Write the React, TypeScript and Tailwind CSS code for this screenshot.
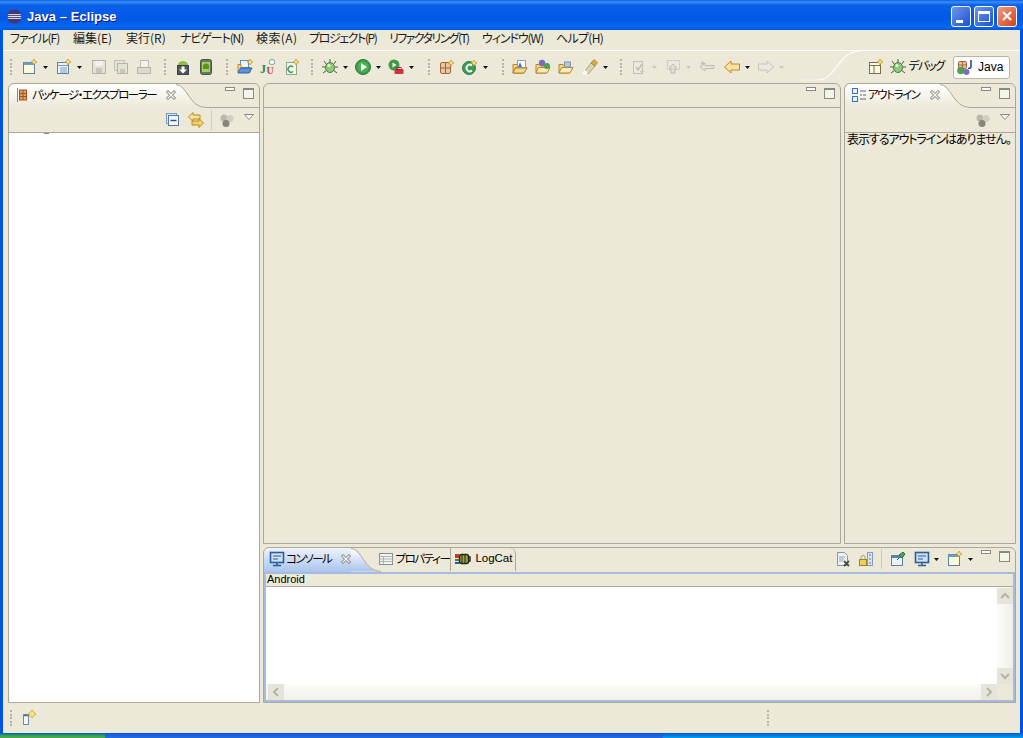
import type { ReactNode } from 'react';

const S = ({ children, w = 16, h = 16 }: { children: ReactNode; w?: number; h?: number }) => (
  <svg width={w} height={h} viewBox={`0 0 ${w} ${h}`} className="shrink-0 block">{children}</svg>
);

const Sparkle = ({ x = 12, y = 3 }: { x?: number; y?: number }) => (
  <path d={`M${x} ${y - 3}l1 2 2 1-2 1-1 2-1-2-2-1 2-1z`} fill="#fbe27a" stroke="#b98a1c" strokeWidth=".6" />
);

const FolderOpen = () => (
  <>
    <path d="M1 5.5h4l1 1.5h5v7H1z" fill="#f7d98c" stroke="#b5862a" />
    <path d="M1 14l2.5-5.5H15L12 14z" fill="#fbeab5" stroke="#b5862a" />
  </>
);

const icons: Record<string, ReactNode> = {
  newWiz: (
    <>
      <rect x="1.5" y="3.5" width="11" height="11" fill="#fdf8d8" stroke="#5c80a8" />
      <rect x="1.5" y="3.5" width="11" height="2.5" fill="#6f9bc8" />
      <Sparkle />
    </>
  ),
  newType: (
    <>
      <rect x="1.5" y="3.5" width="11" height="11" fill="#eef2f8" stroke="#5c80a8" />
      <path d="M2 6.500h10M4 9h7M4 11h7M4 13h7" stroke="#7a9cc0" />
      <Sparkle />
    </>
  ),
  save: (
    <>
      <rect x="1.5" y="1.5" width="13" height="13" fill="#e4e2d6" stroke="#b4b3a8" />
      <rect x="4" y="2" width="8" height="5" fill="#f3f2ea" />
      <rect x="5" y="9" width="6" height="5" fill="#c9c7bb" />
    </>
  ),
  saveAll: (
    <>
      <rect x="1.500" y="1.500" width="10" height="10" fill="#e4e2d6" stroke="#c1c0b4" />
      <rect x="4.500" y="4.500" width="10" height="10" fill="#e4e2d6" stroke="#b4b3a8" />
      <rect x="7" y="10" width="5" height="4" fill="#c9c7bb" />
    </>
  ),
  print: (
    <>
      <rect x="4.500" y="1.500" width="8" height="8" fill="#f3f2ea" stroke="#bdbcb0" />
      <rect x="1.500" y="8.500" width="13" height="6" fill="#dcdace" stroke="#b4b3a8" />
    </>
  ),
  droidDown: (
    <>
      <path d="M3 6a5 4 0 0 1 10 0z" fill="#8fbf3f" />
      <rect x="2.500" y="6.500" width="11" height="9" fill="#50565c" stroke="#3c4147" />
      <path d="M6.500 7.500h3v3H12l-4 4-4-4h2.500z" fill="#fff" />
    </>
  ),
  droidPhone: (
    <>
      <rect x="2.500" y=".5" width="11" height="15" rx="2" fill="#6a766c" stroke="#4a524c" />
      <rect x="4" y="3" width="8" height="10" fill="#a4cf58" />
      <path d="M5 7a3 2.500 0 0 1 6 0v3H5z" fill="#5f8f23" />
    </>
  ),
  newProj: (
    <>
      <rect x="3.500" y="1.500" width="8" height="7" fill="#eef4fb" stroke="#6a8db4" />
      <path d="M1 5.500h3v3h9v5H1z" fill="#f7d98c" stroke="#b5862a" />
      <path d="M1 14l2.500-5H15L12 14z" fill="#5a94dc" stroke="#2f5fa8" />
      <Sparkle x={13} y={3} />
    </>
  ),
  junit: (
    <>
      <rect x="9.500" y=".5" width="5" height="5" rx="2" fill="#fff" stroke="#6fa07a" />
      <text x="0" y="14" fontSize="12" fontWeight="700" fontFamily="Liberation Serif, serif" fill="#238c50">J</text>
      <text x="6.500" y="15" fontSize="10" fontWeight="700" fontFamily="Liberation Serif, serif" fill="#d0404a">U</text>
    </>
  ),
  newClass: (
    <>
      <rect x="2.500" y="3.500" width="10" height="12" fill="#f8f4e2" stroke="#8da88a" />
      <path d="M9 8a3 3 0 1 0 0 4.500" fill="none" stroke="#2f9a68" strokeWidth="1.400" />
      <Sparkle />
    </>
  ),
  bug: (
    <>
      <path d="M2 2l3 4M14 2l-3 4M0 8h4M16 8h-4M1 14l4-3M15 14l-4-3M8 0v3" stroke="#4c5b44" />
      <ellipse cx="8" cy="8.500" rx="4.500" ry="5" fill="#8fc97a" stroke="#4a7a3c" />
      <circle cx="7" cy="6.500" r="1.500" fill="#e5f5d8" />
    </>
  ),
  run: (
    <>
      <circle cx="8" cy="8" r="7.500" fill="#3f9a46" stroke="#2d7a3a" />
      <circle cx="8" cy="8" r="5.500" fill="#4bb154" />
      <path d="M6 4l6 4-6 4z" fill="#f4fbf0" />
    </>
  ),
  ext: (
    <>
      <circle cx="6" cy="6" r="5.500" fill="#3f9a46" />
      <path d="M4.500 3.500l4 2.500-4 2.500z" fill="#f4fbf0" />
      <rect x="6.500" y="10" width="9" height="5" rx="1" fill="#d8303a" />
      <rect x="9" y="8.500" width="4" height="2" fill="none" stroke="#a02028" />
    </>
  ),
  grid: (
    <>
      <rect x="1.500" y="3.500" width="10" height="11" rx="1.500" fill="#e7c8a0" stroke="#a5623a" />
      <path d="M6.500 3.500v11M1.500 9h10" stroke="#a5623a" />
      <Sparkle x={12} y={4} />
    </>
  ),
  greenC: (
    <>
      <circle cx="7" cy="9" r="6.500" fill="#3f9a56" stroke="#2c7a44" />
      <path d="M10 6.500a3.300 3.300 0 1 0 0 5" fill="none" stroke="#fff" strokeWidth="1.800" />
      <Sparkle x={12} y={4} />
    </>
  ),
  folderA: (
    <>
      <FolderOpen />
      <rect x="5.500" y="1.500" width="8" height="7" fill="#fff" stroke="#8aa0b8" />
      <path d="M6 8l2-5 2 5z" fill="#3c7ac8" />
      <path d="M1 14l2.500-5H15L12 14z" fill="#f7d98c" stroke="#b5862a" />
    </>
  ),
  folderB: (
    <>
      <FolderOpen />
      <circle cx="7" cy="4" r="3.200" fill="#7a6cc0" />
      <circle cx="12" cy="7" r="3" fill="#4fa050" />
    </>
  ),
  folderC: (
    <>
      <FolderOpen />
      <rect x="6.500" y="3" width="6" height="5" fill="#b9c7d8" stroke="#8296ac" />
    </>
  ),
  torch: (
    <>
      <path d="M3 12l6-8 4 3-7 8z" fill="#dcd6b2" stroke="#8a8468" strokeWidth=".7" />
      <path d="M9 4l3-3.500 3.500 3-2.500 3.500z" fill="#e2a93e" stroke="#a87a24" strokeWidth=".7" />
      <path d="M0 14l3-3 3 3-3 2z" fill="#fff" />
    </>
  ),
  nextAnn: (
    <>
      <rect x="2.500" y="2.500" width="9" height="12" fill="#eceae0" stroke="#c3c2b6" />
      <path d="M5 8l2 3 4-6" fill="none" stroke="#bdbcae" strokeWidth="1.500" />
      <path d="M11 10v4m-2-2l2 2 2-2" fill="none" stroke="#c8c7ba" />
    </>
  ),
  prevAnn: (
    <>
      <rect x="2.500" y="1.500" width="12" height="9" fill="#eceae0" stroke="#c3c2b6" strokeDasharray="2 1" />
      <path d="M8 5l4 4H10v5H6V9H4z" fill="#e2e0d4" stroke="#bdbcae" />
    </>
  ),
  backEdit: (
    <>
      <path d="M1 8l5-4v2.500h9v3H6V12z" fill="#e6e4d8" stroke="#bdbcae" />
      <circle cx="3.500" cy="4" r="1.500" fill="#c3c2b6" />
    </>
  ),
  back: <path d="M.5 8l6.500-6v3h8.500v6H7v3z" fill="#fbe29a" stroke="#c08a24" />,
  forward: <path d="M15.500 8L9 2v3H.5v6H9v3z" fill="#eceae0" stroke="#c3c2b6" />,
  openPersp: (
    <>
      <rect x="1.500" y="3.500" width="11" height="11" fill="#fdfbe8" stroke="#7c6a4a" />
      <path d="M1.500 6.500h11M6 6.500v8" stroke="#7c6a4a" />
      <Sparkle />
    </>
  ),
  java: (
    <>
      <rect x="1.500" y="2.500" width="8" height="7" rx="1.500" fill="#e7c8a0" stroke="#a5623a" />
      <path d="M5.500 2.500v7M1.500 6h8" stroke="#a5623a" />
      <circle cx="4" cy="11.500" r="3.800" fill="#4fa050" />
      <circle cx="9.500" cy="13" r="3" fill="#7a6cc0" />
      <path d="M14 1v7a2 2 0 0 1-3 1" fill="none" stroke="#26407c" strokeWidth="1.500" />
    </>
  ),
  pkg: (
    <>
      <path d="M2.500 1v14" stroke="#6c8cb0" />
      <rect x="4.500" y="3" width="7" height="10" fill="#e2a060" stroke="#9a5420" />
      <path d="M8 3v10M4.500 6.500h7M4.500 9.500h7" stroke="#9a5420" />
    </>
  ),
  collapse: (
    <>
      <rect x="1.500" y="1.500" width="10" height="10" fill="#dbe7f4" stroke="#7a9cc0" />
      <rect x="3.500" y="3.500" width="10" height="10" fill="#f3f7fb" stroke="#4f7aa8" />
      <path d="M5.500 8.500h6" stroke="#2b4f80" strokeWidth="1.400" />
    </>
  ),
  link: (
    <>
      <path d="M.5 5l4.500-4.500v2.500h7v4H5v2.500z" fill="#fbe29a" stroke="#b98a1c" />
      <path d="M15.500 11L11 6.500V9H4v4h7v2.500z" fill="#f5cf6a" stroke="#b98a1c" />
    </>
  ),
  dots: (
    <>
      <circle cx="5" cy="6" r="3.500" fill="#b9b8ac" />
      <circle cx="11" cy="6.500" r="3.500" fill="#d0cfc4" />
      <circle cx="7" cy="11.500" r="3.500" fill="#86857a" />
    </>
  ),
  outline: (
    <>
      <rect x="1.500" y="1.500" width="5" height="5" fill="#e9f1fb" stroke="#3a72c0" />
      <rect x="1.500" y="9.500" width="5" height="5" fill="#e9f1fb" stroke="#3a72c0" />
      <path d="M9 4h6M9 8h2M12 8h3M9 12h6" stroke="#5a6a78" />
    </>
  ),
  monitor: (
    <>
      <rect x="1.500" y="1.500" width="13" height="10" fill="#cfe0f2" stroke="#2c5f98" strokeWidth="1.600" />
      <path d="M4 5h8M4 8h5" stroke="#2c5f98" />
      <path d="M4 14.500h8M8 12v2" stroke="#2c5f98" strokeWidth="1.500" />
    </>
  ),
  table: (
    <>
      <rect x="1.500" y="2.500" width="13" height="11" fill="#f4f4ee" stroke="#8a8d90" />
      <path d="M1.500 5.500h13M1.500 8h13M1.500 10.500h13M5.500 5.500v8" stroke="#b0b3b6" />
    </>
  ),
  logcat: (
    <>
      <rect x="4.500" y="3.500" width="9" height="9" rx="2" fill="#a4a040" stroke="#20241c" strokeWidth="1.400" />
      <path d="M7 4v8M10 4v8" stroke="#20241c" />
      <path d="M0 4h4M0 6h4" stroke="#d03030" strokeWidth="2" />
      <path d="M0 9h4" stroke="#2f8f3f" strokeWidth="2" />
      <path d="M0 12h4" stroke="#3050c8" strokeWidth="2" />
      <path d="M13 6h2v4h-2" fill="none" stroke="#20241c" strokeWidth="1.400" />
    </>
  ),
  clear: (
    <>
      <path d="M2.500 1.500h7l3 3v10h-10z" fill="#eef0f4" stroke="#8a94a4" />
      <path d="M4 6h6M4 8h5M4 10h4" stroke="#9aa4b4" />
      <path d="M9 10l5 5m0-5l-5 5" stroke="#4a4f4a" strokeWidth="1.800" />
    </>
  ),
  lock: (
    <>
      <rect x="9.500" y="1.500" width="5" height="13" fill="#dde4ee" stroke="#8a9ab0" />
      <path d="M11 4h2M11 8h2M11 12h2" stroke="#4f7aa8" />
      <rect x="1.500" y="8.500" width="7" height="6" fill="#f0cc68" stroke="#a5801f" />
      <path d="M3 8.500v-2a2 2 0 0 1 4 0v2" fill="none" stroke="#9a9a90" />
    </>
  ),
  pin: (
    <>
      <rect x="1.500" y="4.500" width="11" height="10" fill="#eaf1f9" stroke="#5c80a8" />
      <rect x="1.500" y="4.500" width="11" height="2.500" fill="#4f85ba" />
      <path d="M7 9l3-3 M9 4l4-3 2 2-3 4z" fill="#4fa050" stroke="#2c7a3c" />
    </>
  ),
};

const Ic = ({ name }: { name: string }) => <S>{icons[name]}</S>;

const Arrow = ({ dim }: { dim?: boolean }) => (
  <svg width="5" height="3" viewBox="0 0 5 3" className="shrink-0 block">
    <path d="M0 0h5L2.500 3z" fill={dim ? '#c9c8bc' : '#111'} />
  </svg>
);

const Grip = () => (
  <div className="flex h-[20px] w-[2px] shrink-0 flex-col justify-between py-[2px]">
    {[0, 1, 2, 3, 4].map(i => <span key={i} className="block h-[2px] w-[2px] bg-[#b5b3a4]" />)}
  </div>
);

// left margin is measured from the previous item
type TB = { n?: string; arrow?: boolean; dim?: boolean; grip?: boolean; ml: number };
const tools: TB[] = [
  { grip: true, ml: 7 },
  { n: 'newWiz', arrow: true, ml: 10 },
  { n: 'newType', arrow: true, ml: 8 },
  { n: 'save', ml: 9 },
  { n: 'saveAll', ml: 6 },
  { n: 'print', ml: 7 },
  { grip: true, ml: 12 },
  { n: 'droidDown', ml: 9 },
  { n: 'droidPhone', ml: 7 },
  { grip: true, ml: 12 },
  { n: 'newProj', ml: 9 },
  { n: 'junit', ml: 7 },
  { n: 'newClass', ml: 8 },
  { grip: true, ml: 11 },
  { n: 'bug', arrow: true, ml: 9 },
  { n: 'run', arrow: true, ml: 7 },
  { n: 'ext', arrow: true, ml: 7 },
  { grip: true, ml: 14 },
  { n: 'grid', ml: 9 },
  { n: 'greenC', arrow: true, ml: 7 },
  { grip: true, ml: 14 },
  { n: 'folderA', ml: 8 },
  { n: 'folderB', ml: 7 },
  { n: 'folderC', ml: 7 },
  { n: 'torch', arrow: true, ml: 8 },
  { grip: true, ml: 12 },
  { n: 'nextAnn', arrow: true, dim: true, ml: 9 },
  { n: 'prevAnn', arrow: true, dim: true, ml: 8 },
  { n: 'backEdit', ml: 8 },
  { n: 'back', arrow: true, ml: 9 },
  { n: 'forward', arrow: true, dim: true, ml: 8 },
];

const menus: [string, string][] = [
  ['ファイル(F)', 'w-[63px] tracking-[-1px]'],
  ['編集(E)', 'w-[53px] tracking-[0px]'],
  ['実行(R)', 'w-[54px] tracking-[0px]'],
  ['ナビゲート(N)', 'w-[76px] tracking-[-1.1px]'],
  ['検索(A)', 'w-[53px] tracking-[0.4px]'],
  ['プロジェクト(P)', 'w-[80px] tracking-[-1.4px]'],
  ['リファクタリング(T)', 'w-[93px] tracking-[-1.6px]'],
  ['ウィンドウ(W)', 'w-[74px] tracking-[-1.1px]'],
  ['ヘルプ(H)', 'w-[50px] tracking-[-0.7px]'],
];

const kana = 'whitespace-nowrap text-[11.5px] tracking-[-1.45px]';

const MinMax = () => (
  <div className="flex items-start gap-[8px]">
    <span className="block h-[4px] w-[10px] border border-[#8a8a7c] bg-white" />
    <span className="mt-[1px] block h-[11px] w-[11px] border border-[#8a8a7c] border-t-2 bg-[#f4f3ec]" />
  </div>
);

const CloseX = () => (
  <svg width="10" height="10" viewBox="0 0 10 10" className="shrink-0 block">
    <path d="M.5 2L2 .5 5 3.500 8 .5 9.500 2 6.500 5 9.500 8 8 9.500 5 6.500 2 9.500 .5 8 3.500 5z" fill="#f6f5ee" stroke="#77766c" />
  </svg>
);

// swoosh on the right side of a selected tab
const TabCurve = ({ id, end }: { id: string; end: string }) => (
  <svg width="30" height="24" viewBox="0 0 30 24" className="block shrink-0">
    <defs>
      <linearGradient id={id} x1="0" y1="0" x2="0" y2="1">
        <stop offset="0" stopColor="#ffffff" />
        <stop offset="1" stopColor={end} />
      </linearGradient>
    </defs>
    <path d="M0 0.500C11 0.500 13 23.500 29 23.500H0z" fill={`url(#${id})`} />
    <path d="M0 0.500C11 0.500 13 23.500 30 23.500" fill="none" stroke="#aca899" />
  </svg>
);

function ViewTab({ icon, label, id }: { icon: string; label: string; id: string }) {
  return (
    <div className="flex h-[24px] shrink-0">
      <div className="flex items-center gap-[1px] rounded-tl-[6px] bg-gradient-to-b from-white to-[#ece9d8] pb-[3px] pl-[6px]">
        <Ic name={icon} />
        <span className={kana}>{label}</span>
        <span className="ml-[9px]"><CloseX /></span>
      </div>
      <TabCurve id={id} end="#ece9d8" />
    </div>
  );
}

const Sep = () => <span className="ml-[7px] mr-[7px] block h-[20px] w-px bg-[#cfccba]" />;

const ViewMenu = () => (
  <svg width="10" height="6" viewBox="0 0 10 6" className="mb-[6px] ml-[9px] block">
    <path d="M.5.500h9L5 5.500z" fill="#fff" stroke="#8a8a7c" />
  </svg>
);

const Chevron = ({ d }: { d: string }) => (
  <svg width="16" height="16" viewBox="0 0 16 16" className="block shrink-0 bg-[#e6e4d8]">
    <path d={d} fill="none" stroke="#b4b3a6" strokeWidth="2" />
  </svg>
);

export default function App() {
  return (
    <div className="flex h-[738px] w-[1023px] flex-col overflow-hidden bg-[#0054e3] text-[12px] leading-none text-black [font-family:'Noto_Sans_CJK_JP','Liberation_Sans',sans-serif] [font-feature-settings:'palt']">
      {/* Title bar */}
      <header className="flex h-[30px] shrink-0 items-center bg-[linear-gradient(#0a5fe8_0px,#3a8ff5_2px,#0a62e8_5px,#0058e6_60%,#0568ee_90%,#0054e3_100%)] pl-[7px] pr-[6px] pt-[2px]">
        <svg width="15" height="15" viewBox="0 0 16 16" className="block shrink-0">
          <circle cx="8" cy="8" r="7.500" fill="#3c3a78" />
          <path d="M.5 6h15M.5 8h15M.5 10h15" stroke="#f2f2fa" strokeWidth="1" />
          <circle cx="8" cy="8" r="7.500" fill="none" stroke="#5a3a88" />
        </svg>
        <span className="ml-[5px] text-[13px] font-bold tracking-[0.05px] text-white [font-family:'Liberation_Sans',sans-serif] [text-shadow:1px_1px_#0f1089]">
          Java – Eclipse
        </span>
        <div className="ml-auto flex gap-[3px]">
          <div className="flex h-[21px] w-[20px] items-end rounded-[3px] border border-white bg-gradient-to-br from-[#6b96f0] to-[#1f50cf] pb-[3px] pl-[4px]">
            <span className="block h-[3px] w-[7px] bg-white" />
          </div>
          <div className="flex h-[21px] w-[20px] items-center justify-center rounded-[3px] border border-white bg-gradient-to-br from-[#6b96f0] to-[#1f50cf]">
            <span className="block h-[11px] w-[12px] border border-white border-t-[3px]" />
          </div>
          <div className="flex h-[21px] w-[20px] items-center justify-center rounded-[3px] border border-white bg-gradient-to-br from-[#f09a7a] to-[#d23c14]">
            <svg width="10" height="10" viewBox="0 0 10 10" className="block">
              <path d="M1 1l8 8M9 1l-8 8" stroke="#fff" strokeWidth="2" />
            </svg>
          </div>
        </div>
      </header>

      {/* Window body */}
      <div className="relative mx-[3px] flex min-h-0 flex-1 flex-col bg-[#ece9d8]">
        <nav className="flex h-[20px] shrink-0 items-center pb-[4px] pl-[7px] text-[#1a1a1a]">
          {menus.map(([m, cls]) => (
            <span key={m} className={`whitespace-nowrap ${cls}`}>{m}</span>
          ))}
        </nav>

        {/* Toolbar */}
        <div className="relative flex h-[33px] shrink-0 items-center border-t border-white">
          {tools.map((t, i) => (
            <div key={i} className="flex shrink-0 items-center gap-[5px]" style={{ marginLeft: t.ml }}>
              {t.grip ? <Grip /> : <Ic name={t.n!} />}
              {t.arrow && <Arrow dim={t.dim} />}
            </div>
          ))}
          <div className="ml-auto flex items-center pr-[10px]">
            <Ic name="openPersp" />
            <span className="ml-[6px]"><Ic name="bug" /></span>
            <span className={`ml-[3px] pb-[2px] ${kana}`}>デバッグ</span>
            <div className="ml-[9px] flex h-[23px] w-[57px] items-center gap-[5px] rounded-[3px] border border-[#b8b5a2] bg-white pl-[3px]">
              <Ic name="java" />
              <span className="[font-family:'Liberation_Sans',sans-serif]">Java</span>
            </div>
          </div>
          {/* perspective bar swoosh */}
          <svg width="60" height="31" viewBox="0 0 60 31" className="absolute right-[160px] top-0 block">
            <path d="M60 0C38 0 36 29 18 29" fill="none" stroke="#fff" strokeWidth="1.200" />
            <path d="M18 29H0" fill="none" stroke="#fff" strokeOpacity=".4" />
          </svg>
        </div>

        {/* Workbench */}
        <main className="flex min-h-0 flex-1 gap-[3px] pl-[5px] pr-[4px]">
          {/* Package explorer */}
          <section className="flex w-[252px] shrink-0 flex-col rounded-t-[6px] border border-[#aca899]">
            <div className="flex h-[24px] shrink-0 items-start">
              <ViewTab icon="pkg" label="パッケージ・エクスプローラー" id="c1" />
              <div className="flex h-full flex-1 justify-end border-b border-[#aca899] pr-[5px] pt-[3px]">
                <MinMax />
              </div>
            </div>
            <div className="flex h-[24px] shrink-0 items-center justify-end pr-[5px]">
              <Ic name="collapse" />
              <span className="ml-[7px]"><Ic name="link" /></span>
              <Sep />
              <Ic name="dots" />
              <ViewMenu />
            </div>
            <div className="min-h-0 flex-1 border-t border-[#aca899] bg-white">
              <span className="ml-[35px] block h-px w-[5px] bg-[#8a8a7c]" />
            </div>
          </section>

          <div className="flex min-w-0 flex-1 flex-col gap-[3px]">
            <div className="flex min-h-0 flex-1 gap-[3px]">
              {/* Editor area */}
              <section className="flex min-w-0 flex-1 flex-col rounded-t-[6px] border border-[#aca899]">
                <div className="flex h-[24px] shrink-0 justify-end border-b border-[#aca899] pr-[5px] pt-[3px]">
                  <MinMax />
                </div>
              </section>

              {/* Outline */}
              <section className="flex w-[172px] shrink-0 flex-col rounded-t-[6px] border border-[#aca899]">
                <div className="flex h-[24px] shrink-0 items-start">
                  <ViewTab icon="outline" label="アウトライン" id="c2" />
                  <div className="flex h-full flex-1 justify-end border-b border-[#aca899] pr-[5px] pt-[3px]">
                    <MinMax />
                  </div>
                </div>
                <div className="flex h-[24px] shrink-0 items-center justify-end pr-[5px]">
                  <Ic name="dots" />
                  <ViewMenu />
                </div>
                <div className="flex-1 border-t border-[#aca899] pl-[2px] text-[12px] leading-[11px] tracking-[-1.05px] whitespace-nowrap">
                  表示するアウトラインはありません。
                </div>
              </section>
            </div>

            {/* Console */}
            <section className="flex h-[156px] shrink-0 flex-col rounded-t-[6px] border border-[#aca899]">
              <div className="flex h-[24px] shrink-0 items-start">
                <div className="flex h-[24px] shrink-0">
                  <div className="flex items-center gap-[1px] rounded-tl-[6px] bg-gradient-to-b from-[#eef3fb] to-[#a9c4ec] pb-[3px] pl-[5px]">
                    <Ic name="monitor" />
                    <span className={kana}>コンソール</span>
                    <span className="ml-[9px]"><CloseX /></span>
                  </div>
                  <TabCurve id="c3" end="#a9c4ec" />
                </div>
                <div className="-ml-[3px] flex h-[23px] shrink-0 items-center gap-[1px] pb-[2px]">
                  <Ic name="table" />
                  <span className={kana}>プロパティー</span>
                </div>
                <div className="ml-[1px] flex h-[23px] shrink-0 items-center gap-[4px] rounded-tr-[6px] border-x border-[#aca899] pb-[2px] pl-[4px] pr-[3px] text-[11.5px] [font-family:'Liberation_Sans',sans-serif]">
                  <Ic name="logcat" />
                  LogCat
                </div>
                <div className="flex h-[24px] flex-1 items-center justify-end pb-[2px] pr-[5px]">
                  <Ic name="clear" />
                  <span className="ml-[7px]"><Ic name="lock" /></span>
                  <Sep />
                  <span className="ml-[1px]"><Ic name="pin" /></span>
                  <span className="ml-[8px]"><Ic name="monitor" /></span>
                  <span className="ml-[4px]"><Arrow /></span>
                  <span className="ml-[8px]"><Ic name="newWiz" /></span>
                  <span className="ml-[5px] mr-[8px]"><Arrow /></span>
                  <div className="-mt-[6px]"><MinMax /></div>
                </div>
              </div>
              <div className="flex min-h-0 flex-1 flex-col border-2 border-[#a5bce0]">
                <div className="flex h-[13px] shrink-0 items-center border-b border-[#aca899] pb-[2px] pl-[1px] text-[11px] [font-family:'Liberation_Sans',sans-serif]">
                  Android
                </div>
                <div className="flex min-h-0 flex-1">
                  <div className="flex min-w-0 flex-1 flex-col">
                    <div className="min-h-0 flex-1 bg-white" />
                    <div className="flex h-[16px] shrink-0 justify-between bg-gradient-to-b from-[#fbfbf8] to-[#f1f0e8] pl-[2px]">
                      <Chevron d="M10 4L6 8l4 4" />
                      <Chevron d="M6 4l4 4-4 4" />
                    </div>
                  </div>
                  <div className="flex w-[16px] shrink-0 flex-col">
                    <div className="flex min-h-0 flex-1 flex-col justify-between bg-gradient-to-r from-[#fbfbf8] to-[#f1f0e8] pt-[1px]">
                      <Chevron d="M4 10l4-4 4 4" />
                      <Chevron d="M4 6l4 4 4-4" />
                    </div>
                    <div className="h-[16px] shrink-0 bg-[#ece9d8]" />
                  </div>
                </div>
              </div>
            </section>
          </div>
        </main>

        {/* Status bar */}
        <footer className="flex h-[30px] shrink-0 items-center pl-[7px]">
          <Grip />
          <svg width="16" height="16" viewBox="0 0 16 16" className="ml-[10px] block shrink-0">
            <rect x="1.500" y="4.500" width="5" height="10" fill="#f4f7fb" stroke="#6f8aa8" />
            <path d="M2 5.500h4" stroke="#4a6d94" strokeWidth="1.500" />
            <path d="M10 0l1.700 2.300L14 4l-2.300 1.700L10 8 8.300 5.700 6 4l2.300-1.700z" fill="#fbe27a" stroke="#b98a1c" strokeWidth=".6" />
          </svg>
          <span className="ml-[729px]"><Grip /></span>
        </footer>
      </div>

      {/* Taskbar peeking under the window */}
      <div className="flex h-[5px] shrink-0">
        <div className="w-[105px] bg-gradient-to-b from-[#0054e3] via-[#3f9a46] to-[#4caf50]" />
        <div className="flex-1 bg-gradient-to-b from-[#0054e3] to-[#2a6fe0]" />
        <div className="w-[360px] bg-gradient-to-b from-[#0054e3] to-[#0ea0e8]" />
      </div>
    </div>
  );
}
